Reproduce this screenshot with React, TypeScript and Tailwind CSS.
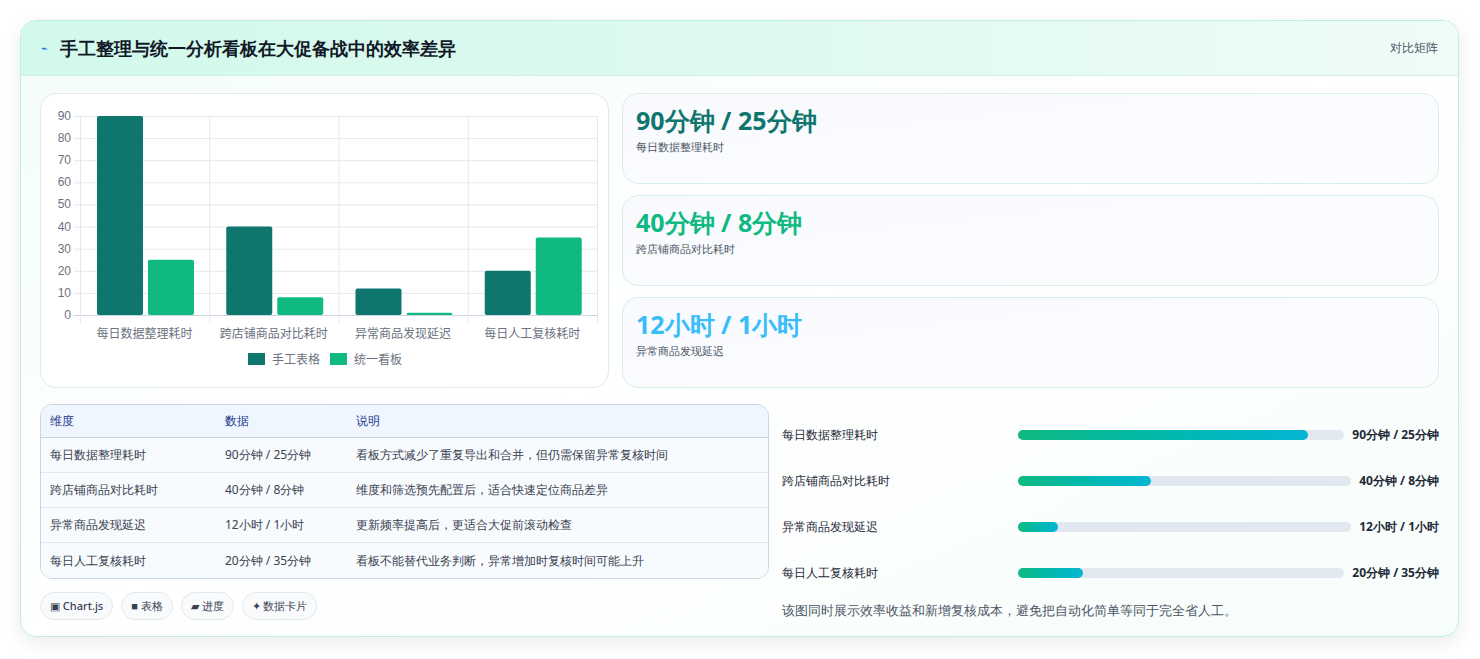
import React from "react";

const cats = ["每日数据整理耗时", "跨店铺商品对比耗时", "异常商品发现延迟", "每日人工复核耗时"];
const a = [90, 40, 12, 20];
const b = [25, 8, 1, 35];

function Chart() {
  const x0 = 39, x1 = 556, y0 = 221, yTop = 22;
  const gw = (x1 - x0) / 4;
  const sy = (v: number) => y0 - (v / 90) * (y0 - yTop);
  return (
    <svg width="568" height="294" className="block">
      {Array.from({ length: 10 }, (_, i) => i * 10).map((v) => (
        <g key={v}>
          <line x1={x0 - 6} x2={x1} y1={sy(v) + 0.5} y2={sy(v) + 0.5} stroke={v === 0 ? "#cbd5e1" : "#e5e7eb"} />
          <text x={x0 - 9} y={sy(v) + 4} textAnchor="end" fontSize="12" fill="#6b7280" fontFamily="Liberation Sans, sans-serif">{v}</text>
        </g>
      ))}
      {[0, 1, 2, 3, 4].map((i) => (
        <line key={i} x1={x0 + gw * i + 0.5} x2={x0 + gw * i + 0.5} y1={yTop} y2={y0 + 8} stroke="#e5e7eb" />
      ))}
      {cats.map((c, i) => (
        <g key={c}>
          <rect x={x0 + gw * i + 17} y={sy(a[i])} width="46" height={y0 - sy(a[i])} rx="2" fill="#0f766e" />
          <rect x={x0 + gw * i + 68} y={sy(b[i])} width="46" height={y0 - sy(b[i])} rx="2" fill="#10b981" />
          <text x={x0 + gw * i + gw / 2} y={244} textAnchor="middle" fontSize="12" fill="#6b7280" fontFamily="Noto Sans CJK SC, sans-serif">{c}</text>
        </g>
      ))}
      <rect x="207" y="259" width="17" height="12" fill="#0f766e" />
      <text x="231" y="270" fontSize="12" fill="#6b7280" fontFamily="Noto Sans CJK SC, sans-serif">手工表格</text>
      <rect x="289" y="259" width="17" height="12" fill="#10b981" />
      <text x="313" y="270" fontSize="12" fill="#6b7280" fontFamily="Noto Sans CJK SC, sans-serif">统一看板</text>
    </svg>
  );
}

const stats = [
  ["90分钟 / 25分钟", "每日数据整理耗时", "text-[#0f766e]"],
  ["40分钟 / 8分钟", "跨店铺商品对比耗时", "text-[#10b981]"],
  ["12小时 / 1小时", "异常商品发现延迟", "text-[#38bdf8]"],
];

const rows = [
  ["每日数据整理耗时", "90分钟 / 25分钟", "看板方式减少了重复导出和合并，但仍需保留异常复核时间"],
  ["跨店铺商品对比耗时", "40分钟 / 8分钟", "维度和筛选预先配置后，适合快速定位商品差异"],
  ["异常商品发现延迟", "12小时 / 1小时", "更新频率提高后，更适合大促前滚动检查"],
  ["每日人工复核耗时", "20分钟 / 35分钟", "看板不能替代业务判断，异常增加时复核时间可能上升"],
];

const bars: [string, number, string][] = [
  ["每日数据整理耗时", 89, "90分钟 / 25分钟"],
  ["跨店铺商品对比耗时", 40, "40分钟 / 8分钟"],
  ["异常商品发现延迟", 12, "12小时 / 1小时"],
  ["每日人工复核耗时", 20, "20分钟 / 35分钟"],
];

export default function App() {
  return (
    <div className="w-[1480px] h-[659px] bg-white p-5 pt-5 pr-[21px] font-['Noto_Sans_CJK_SC','Noto_Sans',sans-serif]">
      <div className="h-[617px] rounded-2xl border border-[#bdeee0] bg-gradient-to-br from-[#f3fdf9] via-white to-[#f6fdfb] shadow-[0_6px_20px_rgba(0,0,0,0.08)] overflow-hidden">
        <div className="h-[55px] flex items-center justify-between px-5 bg-gradient-to-r from-[#d2f9ec] via-[#def9f0] to-[#effcf8] border-b border-[#d4efe7]">
          <div className="flex items-center gap-3">
            <span className="text-[#2563eb] text-[11px]">⌁</span>
            <h1 className="text-[18px] font-bold text-[#111827]">手工整理与统一分析看板在大促备战中的效率差异</h1>
          </div>
          <span className="text-[12px] text-[#4b5563]">对比矩阵</span>
        </div>
        <div className="px-[19px] pt-[17px]">
          <div className="flex gap-[13px]">
            <div className="w-[569px] h-[295px] rounded-2xl border border-[#e2e8f0] bg-white">
              <Chart />
            </div>
            <div className="flex-1 flex flex-col gap-[11px]">
              {stats.map(([v, l, c]) => (
                <div key={l} className="h-[91px] rounded-2xl border border-[#d7efe9] bg-gradient-to-br from-[#f8fafe] to-[#fbfdff] px-[13px] pt-[8px]">
                  <div className={`text-[25px] font-bold leading-[36px] ${c}`}>{v}</div>
                  <div className="text-[11px] text-[#4b5563] mt-[1px]">{l}</div>
                </div>
              ))}
            </div>
          </div>
          <div className="flex gap-[13px] mt-[16px]">
            <div className="w-[729px]">
              <div className="rounded-xl border border-[#cbd5e1] overflow-hidden text-[12px]">
                <div className="grid grid-cols-[175px_131px_1fr] h-[33px] items-center bg-[#eff6ff] border-b border-[#cbd5e1] px-[9px] text-[#1e3a8a] font-medium">
                  <span>维度</span><span>数据</span><span>说明</span>
                </div>
                {rows.map((r, i) => (
                  <div key={i} className={`grid grid-cols-[175px_131px_1fr] h-[35px] items-center px-[9px] text-[#374151] bg-[#f8fbfd] ${i < 3 ? "border-b border-[#e2e8f0]" : ""}`}>
                    <span>{r[0]}</span><span>{r[1]}</span><span>{r[2]}</span>
                  </div>
                ))}
              </div>
              <div className="flex gap-[8px] mt-[13px] text-[11px] text-[#374151] font-medium">
                {["▣ Chart.js", "■ 表格", "▰ 进度", "✦ 数据卡片"].map((t) => (
                  <span key={t} className="h-[28px] px-[9px] flex items-center rounded-full border border-[#e2e8f0] bg-[#f8fafc]">{t}</span>
                ))}
              </div>
            </div>
            <div className="flex-1 pt-[8px]">
              {bars.map(([l, p, v]) => (
                <div key={l} className="flex items-center h-[46px] text-[12px]">
                  <span className="w-[236px] text-[#1f2937] font-medium">{l}</span>
                  <div className="flex-1 h-[10px] rounded-full bg-[#e2e8f0] mr-[8px]">
                    <div className="h-full rounded-full bg-gradient-to-r from-[#10b981] to-[#06b6d4]" style={{ width: `${p}%` }} />
                  </div>
                  <span className="font-bold text-[#1f2937]">{v}</span>
                </div>
              ))}
              <p className="text-[12.5px] text-[#4b5563] mt-[6px]">该图同时展示效率收益和新增复核成本，避免把自动化简单等同于完全省人工。</p>
            </div>
          </div>
        </div>
      </div>
    </div>
  );
}
